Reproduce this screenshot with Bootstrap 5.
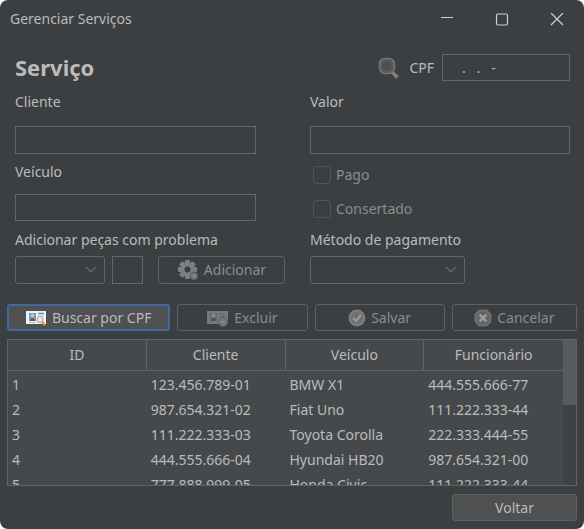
<!DOCTYPE html>
<html lang="pt-BR">
<head>
<meta charset="utf-8">
<meta name="viewport" content="width=device-width, initial-scale=1">
<title>Gerenciar Serviços</title>
<link href="https://cdn.jsdelivr.net/npm/bootstrap@5.3.0/dist/css/bootstrap.min.css" rel="stylesheet">
<style>
  body { background: #fff; font-family: "Noto Sans", "Open Sans", sans-serif; font-size: 14px; line-height: 20px; color: #bbb; }
  .window { background: #3c3f41; border-radius: 8px; height: 100vh; min-height: 460px; }
  .titlebar { height: 40px; padding: 0 5px 2px 10px; }
  .titlebar h1 { font-size: inherit; font-weight: 400; line-height: inherit; }
  .caption-btn { width: 45px; height: 30px; margin-left: 10px; padding: 0; border: 0; background: none; color: #d0d0d0; }
  .form-area { padding: 14px 14px 0 15px; }
  .form-title { font-size: 22px; font-weight: 700; line-height: 27px; }
  .fields { display: grid; grid-template-columns: 295fr 260fr; row-gap: 6px; margin-top: 11px; }
  .col-left { padding-right: 54px; }
  .box { height: 28px; background: #3c3f41; border: 1px solid #646668; border-radius: 0; color: #bbb; padding: 0 8px; font-size: 14px; line-height: 20px; }
  .box:focus { background: #3c3f41; color: #bbb; }
  .box-short { height: 27px; }
  .cpf { width: 128px; }
  .qty { width: 31px; margin: 0 15px 0 7px; }
  .pick { border-radius: 3px; flex: none;
    background: #3c3f41 url("data:image/svg+xml,%3Csvg xmlns='http://www.w3.org/2000/svg' width='12' height='8' viewBox='0 0 12 8'%3E%3Cpath d='M1 1l5 5 5-5' fill='none' stroke='%23686a6c' stroke-width='1.2'/%3E%3C/svg%3E") no-repeat right 7px center / 12px 8px; }
  .pick:disabled, .box:disabled { background-color: #3c3f41; opacity: 1; }
  .pick-part { width: 90px; }
  .pick-pay { width: 155px; }
  .gap-label { margin-top: 14px; }
  .gap-field { margin-top: 12px; }
  .gap-part { margin-top: 9px; }
  .check { gap: 5px; height: 18px; margin-left: 3px; color: #8c8c8c; }
  .check input { width: 18px; height: 18px; margin: 0; background: #3c3f41; border: 1px solid #535557; border-radius: 3px; }
  .check input:disabled, .check input:disabled ~ label { opacity: 1; }
  .tool { display: flex; align-items: center; justify-content: center; gap: 5px; height: 27px; padding: 0; border: 1px solid #5e6162; border-radius: 3px; background: #4e5052; color: #bbb; font-size: 14px; line-height: 20px; }
  .tool:hover { background: #55585a; border-color: #5e6162; color: #bbb; }
  .tool:disabled { background: #3c3f41; border-color: #5e6162; color: #8c8c8c; opacity: 1; }
  .tool-active, .tool-active:hover { border: 2px solid #41699b; }
  .tool-add { width: 127px; height: 28px; }
  .tool-back { width: 125px; }
  .toolbar-row { display: grid; grid-template-columns: 163fr 130fr 130fr 125fr; gap: 7px; margin: 20px 7px 8px; }
  .grid-frame { background: #46494b; border: 1px solid #616365; margin: 0 7px; flex: 1 1 0; min-height: 0; }
  .grid-scroll { overflow-y: auto; scrollbar-width: none; }
  .grid-scroll::-webkit-scrollbar { display: none; }
  .services { width: 100%; table-layout: fixed; border-collapse: separate; border-spacing: 0; }
  .services th { position: sticky; top: 0; height: 31px; background: #46494b; font-weight: 400; text-align: center; border-right: 1px solid #616365; border-bottom: 1px solid #616365; padding: 0; }
  .services th:last-child { border-right: 0; }
  .services td { height: 25px; padding: 2px 4px 0; white-space: nowrap; overflow: hidden; }
  .rail { width: 13px; flex: none; background: #3f4244; }
  .thumb { height: 45%; background: #595c5f; }
  .footer-row { padding: 8px 7px; }
</style>
<script src="https://cdn.jsdelivr.net/npm/bootstrap@5.3.0/dist/js/bootstrap.bundle.min.js"></script>
</head>
<body>
<main class="window d-flex flex-column overflow-hidden">
  <header class="titlebar d-flex align-items-center">
    <h1 class="m-0 me-auto">Gerenciar Serviços</h1>
    <button class="caption-btn" aria-label="Minimizar"><svg width="14" height="14" viewBox="0 0 14 14" fill="none" stroke="currentColor"><path d="M1 4.500h12"/></svg></button>
    <button class="caption-btn" aria-label="Maximizar"><svg width="14" height="14" viewBox="0 0 14 14" fill="none" stroke="currentColor" stroke-width="1.200"><rect x="1.500" y="1" width="11" height="11" rx="1.500"/></svg></button>
    <button class="caption-btn" aria-label="Fechar"><svg width="14" height="14" viewBox="0 0 14 14" fill="none" stroke="currentColor" stroke-width="1.200"><path d="M1 0l12 12M13 0L1 12"/></svg></button>
  </header>

  <section class="form-area">
    <div class="d-flex align-items-center">
      <h2 class="form-title m-0 me-auto">Serviço</h2>
      <svg class="me-2" width="24" height="24" viewBox="0 0 24 24"><path d="M15 14l7 6-3 3-6-7z" fill="#7c7c7c"/><rect x="2.500" y="2.500" width="15" height="15" rx="5.500" fill="#565859" stroke="#777" stroke-width="1.500"/><circle cx="10" cy="10" r="5.500" fill="#4d4f50" stroke="#626364"/></svg>
      <label for="cpf" class="me-2">CPF</label>
      <input id="cpf" class="form-control box box-short cpf" type="text" value="&nbsp;&nbsp;&nbsp;.&nbsp;&nbsp;&nbsp;.&nbsp;&nbsp;&nbsp;-">
    </div>

    <div class="fields">
      <div class="col-left d-flex flex-column">
        <label for="cliente">Cliente</label>
        <input id="cliente" class="form-control box gap-label" type="text">
        <label for="veiculo" class="mt-2">Veículo</label>
        <input id="veiculo" class="form-control box box-short gap-field" type="text">
        <label for="peca" class="gap-part">Adicionar peças com problema</label>
      </div>
      <div class="d-flex flex-column">
        <label for="valor">Valor</label>
        <input id="valor" class="form-control box gap-label" type="text">
        <div class="check d-flex align-items-center gap-field"><input id="pago" class="form-check-input" type="checkbox" disabled><label for="pago">Pago</label></div>
        <div class="check d-flex align-items-center mt-3"><input id="consertado" class="form-check-input" type="checkbox" disabled><label for="consertado">Consertado</label></div>
        <label for="metodo" class="gap-field">Método de pagamento</label>
      </div>
      <div class="d-flex">
        <select id="peca" class="form-select box pick pick-part" disabled><option></option></select>
        <input class="form-control box qty" type="text" aria-label="Quantidade" disabled>
        <button class="btn tool tool-add" disabled>
          <svg width="22" height="22" viewBox="0 0 22 22"><g fill="#7d7f80"><circle cx="10.500" cy="10.500" r="7.200"/><g id="teeth"><rect x="8" y="1" width="5" height="19" rx="1"/><rect x="1" y="8" width="19" height="5" rx="1"/></g><use href="#teeth" transform="rotate(45 10.500 10.500)"/></g><circle cx="10.500" cy="10.500" r="3" fill="#3c3f41"/><circle cx="17" cy="17" r="3.700" fill="#777" stroke="#5a5c5d"/><path d="M15 17h4M17 15v4" stroke="#8c8c8c"/></svg>
          Adicionar
        </button>
      </div>
      <div class="d-flex"><select id="metodo" class="form-select box pick pick-pay" disabled><option></option></select></div>
    </div>
  </section>

  <div class="toolbar-row">
    <button class="btn tool tool-active">
      <svg width="21" height="17" viewBox="0 0 21 17"><rect x="0" y="2" width="20" height="13" fill="#f1f1f1"/><rect x="3" y="4" width="7" height="8" fill="#4fa3e3"/><circle cx="6.500" cy="6.500" r="2" fill="#f0b987"/><path d="M4 12c0-4 5-4 5 0z" fill="#805437"/><path d="M12 4.500h6" stroke="#3f9be5" stroke-width="1.500"/><path d="M12 7h6M3 13.500h7" stroke="#b9c5ce"/><circle cx="14" cy="10.500" r="3" fill="#f7e7d5" stroke="#aaa096"/><path d="M16 12.500l3 4" stroke="#e28a2f" stroke-width="2"/></svg>
      Buscar por CPF
    </button>
    <button class="btn tool" disabled>
      <svg width="22" height="18" viewBox="0 0 22 18"><rect x="0" y="2" width="21" height="13" fill="#777a7b"/><rect x="3" y="4" width="7" height="8" fill="#656768"/><circle cx="6.500" cy="6.500" r="2" fill="#8b8b8b"/><path d="M4 12c0-4 5-4 5 0z" fill="#4c4e4f"/><path d="M12 4.500h6M12 7h6" stroke="#616364"/><circle cx="16" cy="13" r="4.500" fill="#777" stroke="#5c5e5f"/><path d="M14 13h4" stroke="#898989" stroke-width="1.500"/></svg>
      Excluir
    </button>
    <button class="btn tool" disabled>
      <svg width="18" height="18" viewBox="0 0 18 18"><circle cx="9" cy="9" r="8.500" fill="#7c7c7c"/><circle cx="9" cy="9" r="6" fill="#707070"/><path d="M5 9l3 3 5-6" fill="none" stroke="#9a9a9a" stroke-width="2"/></svg>
      Salvar
    </button>
    <button class="btn tool" disabled>
      <svg width="18" height="18" viewBox="0 0 18 18"><path d="M5 .5h8L17.500 5v8L13 17.500H5L.5 13V5z" fill="#6d6d6d"/><path d="M6 3h6l3 3v6l-3 3H6l-3-3V6z" fill="#626262"/><path d="M5.500 5.500l7 7M12.500 5.500l-7 7" stroke="#9a9a9a" stroke-width="2.500"/></svg>
      Cancelar
    </button>
  </div>

  <div class="grid-frame d-flex">
    <div class="grid-scroll flex-grow-1" tabindex="-1">
      <table class="services">
        <thead><tr><th scope="col">ID</th><th scope="col">Cliente</th><th scope="col">Veículo</th><th scope="col">Funcionário</th></tr></thead>
        <tbody>
          <tr><td>1</td><td>123.456.789-01</td><td>BMW X1</td><td>444.555.666-77</td></tr>
          <tr><td>2</td><td>987.654.321-02</td><td>Fiat Uno</td><td>111.222.333-44</td></tr>
          <tr><td>3</td><td>111.222.333-03</td><td>Toyota Corolla</td><td>222.333.444-55</td></tr>
          <tr><td>4</td><td>444.555.666-04</td><td>Hyundai HB20</td><td>987.654.321-00</td></tr>
          <tr><td>5</td><td>777.888.999-05</td><td>Honda Civic</td><td>111.222.333-44</td></tr>
        </tbody>
      </table>
    </div>
    <div class="rail"><div class="thumb"></div></div>
  </div>

  <footer class="footer-row d-flex justify-content-end">
    <button class="btn tool tool-back">Voltar</button>
  </footer>
</main>
</body>
</html>
